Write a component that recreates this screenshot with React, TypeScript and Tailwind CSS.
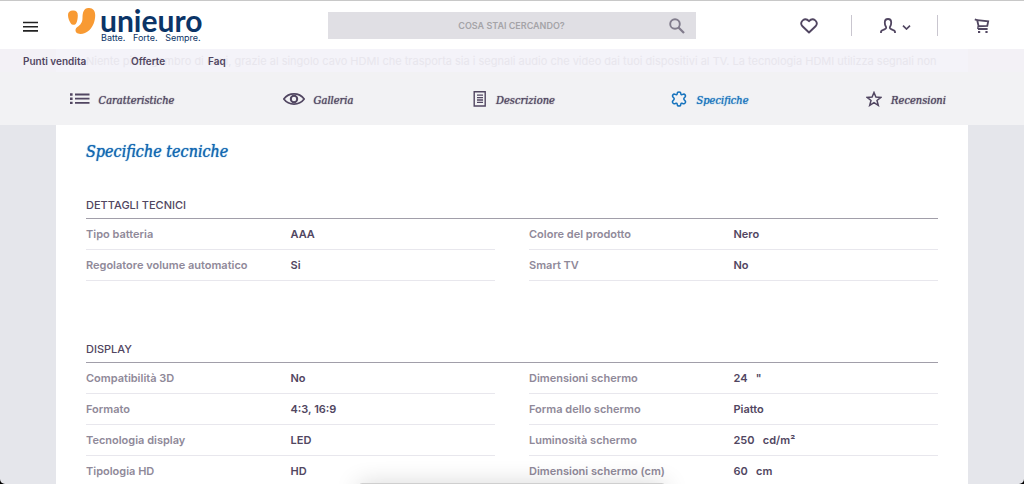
import React from "react";

type Spec = [label: string, value: string];

const SANS = "font-['Inter','Open_Sans',sans-serif]";
const SERIF = "font-['DejaVu_Serif_Condensed','DejaVu_Serif',serif] [text-shadow:0_0_1px_currentColor]";

const sections: { title: string; left: Spec[]; right: Spec[] }[] = [
  {
    title: "DETTAGLI TECNICI",
    left: [
      ["Tipo batteria", "AAA"],
      ["Regolatore volume automatico", "Si"],
    ],
    right: [
      ["Colore del prodotto", "Nero"],
      ["Smart TV", "No"],
    ],
  },
  {
    title: "DISPLAY",
    left: [
      ["Compatibilità 3D", "No"],
      ["Formato", "4:3, 16:9"],
      ["Tecnologia display", "LED"],
      ["Tipologia HD", "HD"],
    ],
    right: [
      ["Dimensioni schermo", "24   \""],
      ["Forma dello schermo", "Piatto"],
      ["Luminosità schermo", "250   cd/m²"],
      ["Dimensioni schermo (cm)", "60   cm"],
    ],
  },
];

function Logo() {
  return (
    <a href="#home" aria-label="Unieuro" className="flex items-start">
      <svg width="28" height="28" viewBox="0 0 28 28" fill="#f89a33" aria-hidden="true">
        <path d="M4.8 2.6C8 2.4 9.9 4.2 9.8 7.4C9.7 10.5 9.3 13.2 8.2 15.2C7.1 17.3 4.4 17.4 2.9 15.4C1.2 13.1 0 10 0 7C0 4.300 1.900 2.700 4.800 2.600Z" />
        <path d="M20.300 0C24.800-.2 27.300 2.700 27.200 7.500C27.100 13 25.300 18.500 21.300 22.200C18 25.300 13.300 26.700 10 25.600C6.900 24.500 6.700 21 9.300 19.100C12.500 16.900 14.500 14.500 14.500 9.800C14.500 4.300 15.900.2 20.300 0Z" />
      </svg>
      <span className="ml-1 flex flex-col text-[#0b3467]">
        <span className="font-['Lato',sans-serif] text-[30px] font-bold leading-6">unieuro</span>
        <span className={`${SANS} whitespace-pre pl-px text-[9px] leading-3`}>Batte.   Forte.   Sempre.</span>
      </span>
    </a>
  );
}

function Icon({ w, h, children }: { w: number; h: number; children: React.ReactNode }) {
  return (
    <svg
      width={w}
      height={h}
      viewBox={`0 0 ${w} ${h}`}
      fill="none"
      stroke="currentColor"
      strokeWidth="1.5"
      className="shrink-0"
      aria-hidden="true"
    >
      {children}
    </svg>
  );
}

const tabs = [
  {
    label: "Caratteristiche",
    icon: (
      <Icon w={20} h={12}>
        <path d="M5 1.500H19.500M5 5.700H19.500M5 9.900H19.500" strokeWidth="1.800" />
        <path d="M0 1.500H2.600M0 5.700H2.600M0 9.900H2.600" strokeWidth="2.400" />
      </Icon>
    ),
  },
  {
    label: "Galleria",
    icon: (
      <Icon w={22} h={12}>
        <path d="M.8 6C3.500 2.400 7 .9 11 .9S18.500 2.400 21.200 6C18.500 9.600 15 11.100 11 11.100S3.500 9.600.8 6Z" strokeWidth="1.700" />
        <circle cx="11" cy="6" r="3.200" strokeWidth="2" />
      </Icon>
    ),
  },
  {
    label: "Descrizione",
    icon: (
      <Icon w={14} h={16}>
        <path d="M1.200.8H12.200V15H1.200Z" strokeWidth="1.400" />
        <path d="M4 4.200H10M4 6.600H10M4 9H10M4 11.400H10" strokeWidth="1.300" />
      </Icon>
    ),
  },
  {
    label: "Specifiche",
    active: true,
    icon: (
      <Icon w={16} h={16}>
        <path
          d="M6.200 2.600C6.200.3 9.800.3 9.800 2.600C9.900 3.900 10.800 4 11.700 3.400C13.800 2.300 15.600 5.100 13.700 6.300C12.500 7.100 12.500 8.600 13.700 9.400C15.600 10.800 13.800 13.500 11.700 12.500C10.800 12 9.900 12.200 9.800 13.300C9.800 15.700 6.200 15.700 6.200 13.300C6.100 12.200 5.200 12 4.300 12.500C2.200 13.500.4 10.800 2.300 9.400C3.500 8.600 3.500 7.100 2.300 6.300C.4 5.100 2.200 2.300 4.300 3.400C5.200 4 6.100 3.900 6.200 2.600Z"
        />
      </Icon>
    ),
  },
  {
    label: "Recensioni",
    icon: (
      <Icon w={16} h={16}>
        <path d="M8 1.500L9.900 6.100L14.800 6.400L11 9.500L12.300 14.400L8 11.700L3.700 14.400L5 9.500L1.200 6.400L6.100 6.100Z" strokeWidth="1.500" />
      </Icon>
    ),
  },
];

function TopBar() {
  return (
    <div className="grid h-[49px] grid-cols-[1fr_36%_1fr] border-t border-[#c8c8c8] bg-white">
      <div className="flex items-start pl-[23px] pt-[7px]">
        <button type="button" aria-label="Menu" className="mr-[30px] mt-[13px] text-[#222]">
          <Icon w={15} h={12}>
            <path d="M0 1.500H15M0 5.700H15M0 9.900H15" strokeWidth="1.600" />
          </Icon>
        </button>
        <Logo />
      </div>
      <form role="search" className="mt-[11px] flex h-[27px] items-center bg-[#e0dfe4] pl-9 pr-[11px]">
        <input
          type="search"
          aria-label="Cerca"
          placeholder="COSA STAI CERCANDO?"
          className="min-w-0 flex-1 bg-transparent text-center text-[9px] font-semibold text-[#77757b] outline-none placeholder:text-[#a5a4a8]"
        />
        <button type="button" aria-label="Avvia ricerca" className="text-[#817c8c]">
          <Icon w={16} h={16}>
            <circle cx="6" cy="6" r="4.800" strokeWidth="1.900" />
            <path d="M9.500 9.500L15 15" strokeWidth="2.300" />
          </Icon>
        </button>
      </form>
      <div className="flex items-center justify-end pr-[34px] pt-px text-[#514661]">
        <button type="button" aria-label="Preferiti">
          <Icon w={18} h={16}>
            <path d="M9 14.500L2.200 8C-1.200 4 4.800-1.400 9 3.200C13.200-1.400 19.200 4 15.800 8Z" strokeWidth="1.900" strokeLinejoin="round" />
          </Icon>
        </button>
        <span className="ml-[33px] h-[21px] w-px bg-[#c9c6cf]" />
        <button type="button" aria-label="Account" className="ml-7 flex items-center gap-[6px]">
          <Icon w={16} h={16}>
            <path d="M1 15V13.800C1 12.300 2.500 12 4.500 11.300C6.500 10.600 6.500 9.600 5.700 8.300C5 7.200 4.800 6.300 4.800 4.500C4.800 2.300 6 1 8 1S11.200 2.300 11.200 4.500C11.200 6.300 11 7.200 10.300 8.300C9.500 9.600 9.500 10.600 11.500 11.300C13.500 12 15 12.300 15 13.800V15" strokeWidth="1.800" />
          </Icon>
          <span className="pt-1">
            <Icon w={9} h={5}>
              <path d="M1 .7L4.500 4L8 .7" strokeWidth="1.700" />
            </Icon>
          </span>
        </button>
        <span className="ml-[26px] h-[21px] w-px bg-[#c9c6cf]" />
        <button type="button" aria-label="Carrello" className="ml-9">
          <Icon w={16} h={16}>
            <path d="M.8 1.400L3.200 2.200L4.600 8.200L13.300 7.800L14.200 3.400L3.200 2.200M4 11H13.600" strokeWidth="1.800" />
            <path d="M4.200 8.200L3.600 11" strokeWidth="1.200" />
            <path d="M4 14H6.200M11.400 14H13.600" strokeWidth="2.200" />
          </Icon>
        </button>
      </div>
    </div>
  );
}

export default function App() {
  return (
    <div className={`${SANS} min-h-screen bg-[#e5e6eb] text-[#514661]`}>
      <header className="sticky top-0">
        <TopBar />
        <div className="relative bg-[#f3f1f6]">
          <p className="absolute inset-y-0 left-14 right-14 overflow-hidden whitespace-nowrap bg-[#f4f3f9] pl-[30px] text-[11px] leading-6 text-[#e8e6ed]">
            Niente più ingombro di cavi, grazie al singolo cavo HDMI che trasporta sia i segnali audio che video dai tuoi dispositivi al TV. La tecnologia HDMI utilizza segnali non
          </p>
          <nav aria-label="Servizi" className="relative flex h-[23px] items-center pl-[23px] pt-px text-[10px] font-semibold">
            <a href="#punti-vendita" className="w-27">Punti vendita</a>
            <a href="#offerte" className="w-[77px]">Offerte</a>
            <a href="#faq">Faq</a>
          </nav>
        </div>
        <nav aria-label="Sezioni prodotto" className="grid h-[53px] grid-cols-5 bg-[#f2f2f4] pl-6 pr-5">
          {tabs.map((tab) => (
            <a
              key={tab.label}
              href={`#${tab.label.toLowerCase()}`}
              className={`flex items-center justify-center gap-[9px] ${tab.active ? "text-[#1673bd]" : "text-[#514661]"}`}
            >
              {tab.icon}
              <span className={`${SERIF} pt-[6px] text-[11px] italic`}>{tab.label}</span>
            </a>
          ))}
        </nav>
      </header>

      <main id="specifiche" className="mx-14 bg-white px-[30px]">
        <h1 className={`${SERIF} pb-8 pt-[15px] text-base italic leading-6 text-[#1268b3]`}>Specifiche tecniche</h1>
        {sections.map((section) => (
          <section key={section.title} className="pb-[59px]">
            <h2 className="border-b border-[#a19ea9] pb-1 text-[11px] font-medium leading-[18px]">{section.title}</h2>
            <div className="grid grid-cols-2 items-start gap-[34px]">
              {[section.left, section.right].map((rows, i) => (
                <table key={i} className="w-full table-fixed border-separate border-spacing-0 text-left text-[11px]">
                  <tbody>
                    {rows.map(([label, value]) => (
                      <tr key={label} className="h-[31px]">
                        <th scope="row" className="whitespace-nowrap border-b border-[#e8e7ed] p-0 font-semibold text-[#8f8999]">{label}</th>
                        <td className="whitespace-pre border-b border-[#e8e7ed] p-0 font-semibold">{value}</td>
                      </tr>
                    ))}
                  </tbody>
                </table>
              ))}
            </div>
          </section>
        ))}
      </main>
      <div aria-hidden="true" className="pointer-events-none fixed inset-x-0 bottom-0 h-9 overflow-hidden">
        <div className="absolute -bottom-2 left-[35%] right-[35%] h-[9px] rounded-lg bg-[#cfcfcf] shadow-[0_4px_24px_#00000050]" />
      </div>
      <div aria-hidden="true" className="pointer-events-none fixed inset-0 rounded-b-[5px] shadow-[0_0_0_4px_#000]" />
    </div>
  );
}
